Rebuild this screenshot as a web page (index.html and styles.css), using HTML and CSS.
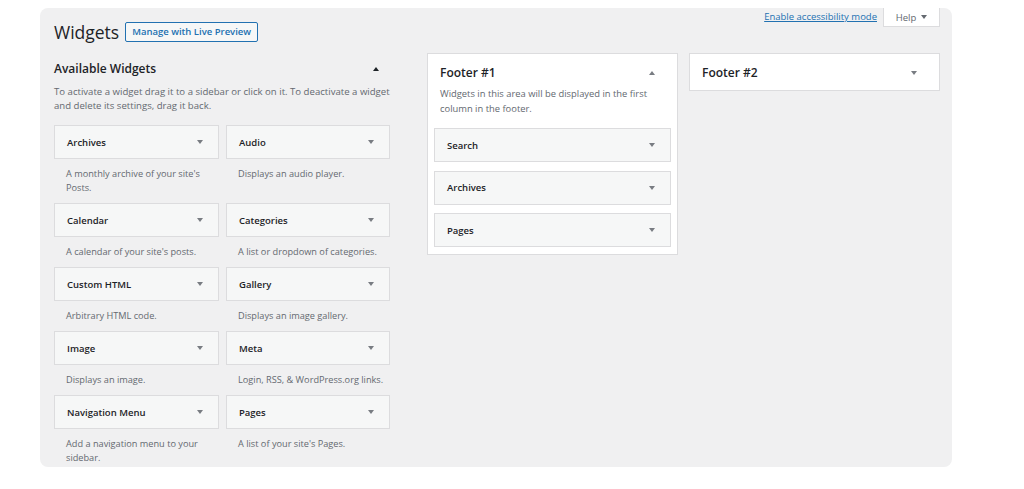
FILE: index.html
```html
<!DOCTYPE html>
<html>
<head>
<meta charset="utf-8">
<link rel="stylesheet" href="styles.css">
</head>
<body>
<div class="panel">
  <div class="screen-meta">
    <a class="a11y" href="#">Enable accessibility mode</a>
    <div class="help-tab">Help <svg class="tri" width="6" height="4" viewBox="0 0 6 4"><path d="M0 0h6L3 4z"/></svg></div>
  </div>
  <div class="head-row">
    <h1 class="title">Widgets</h1>
    <a class="btn" href="#">Manage with Live Preview</a>
  </div>
  <div class="cols">
    <div class="avail">
      <div class="avail-head">
        <h2 class="avail-title">Available Widgets</h2>
        <svg class="tri dark" width="6" height="4" viewBox="0 0 6 4"><path d="M0 4h6L3 0z"/></svg>
      </div>
      <p class="avail-desc">To activate a widget drag it to a sidebar or click on it. To deactivate a widget and delete its settings, drag it back.</p>
      <div class="grid">
        <div class="item"><div class="wbox"><span>Archives</span><svg class="tri" width="6" height="4" viewBox="0 0 6 4"><path d="M0 0h6L3 4z"/></svg></div><p class="wdesc">A monthly archive of your site's Posts.</p></div>
        <div class="item"><div class="wbox"><span>Audio</span><svg class="tri" width="6" height="4" viewBox="0 0 6 4"><path d="M0 0h6L3 4z"/></svg></div><p class="wdesc">Displays an audio player.</p></div>
        <div class="item"><div class="wbox"><span>Calendar</span><svg class="tri" width="6" height="4" viewBox="0 0 6 4"><path d="M0 0h6L3 4z"/></svg></div><p class="wdesc">A calendar of your site's posts.</p></div>
        <div class="item"><div class="wbox"><span>Categories</span><svg class="tri" width="6" height="4" viewBox="0 0 6 4"><path d="M0 0h6L3 4z"/></svg></div><p class="wdesc">A list or dropdown of categories.</p></div>
        <div class="item"><div class="wbox"><span>Custom HTML</span><svg class="tri" width="6" height="4" viewBox="0 0 6 4"><path d="M0 0h6L3 4z"/></svg></div><p class="wdesc">Arbitrary HTML code.</p></div>
        <div class="item"><div class="wbox"><span>Gallery</span><svg class="tri" width="6" height="4" viewBox="0 0 6 4"><path d="M0 0h6L3 4z"/></svg></div><p class="wdesc">Displays an image gallery.</p></div>
        <div class="item"><div class="wbox"><span>Image</span><svg class="tri" width="6" height="4" viewBox="0 0 6 4"><path d="M0 0h6L3 4z"/></svg></div><p class="wdesc">Displays an image.</p></div>
        <div class="item"><div class="wbox"><span>Meta</span><svg class="tri" width="6" height="4" viewBox="0 0 6 4"><path d="M0 0h6L3 4z"/></svg></div><p class="wdesc">Login, RSS, &amp; WordPress.org links.</p></div>
        <div class="item"><div class="wbox"><span>Navigation Menu</span><svg class="tri" width="6" height="4" viewBox="0 0 6 4"><path d="M0 0h6L3 4z"/></svg></div><p class="wdesc">Add a navigation menu to your sidebar.</p></div>
        <div class="item"><div class="wbox"><span>Pages</span><svg class="tri" width="6" height="4" viewBox="0 0 6 4"><path d="M0 0h6L3 4z"/></svg></div><p class="wdesc">A list of your site's Pages.</p></div>
      </div>
    </div>
    <div class="sidebar">
      <div class="sb-head"><h2 class="sb-title">Footer #1</h2><svg class="tri" width="6" height="4" viewBox="0 0 6 4"><path d="M0 4h6L3 0z"/></svg></div>
      <p class="sb-desc">Widgets in this area will be displayed in the first column in the footer.</p>
      <div class="sb-list">
        <div class="wbox"><span>Search</span><svg class="tri" width="6" height="4" viewBox="0 0 6 4"><path d="M0 0h6L3 4z"/></svg></div>
        <div class="wbox"><span>Archives</span><svg class="tri" width="6" height="4" viewBox="0 0 6 4"><path d="M0 0h6L3 4z"/></svg></div>
        <div class="wbox"><span>Pages</span><svg class="tri" width="6" height="4" viewBox="0 0 6 4"><path d="M0 0h6L3 4z"/></svg></div>
      </div>
    </div>
    <div class="sidebar closed">
      <div class="sb-head"><h2 class="sb-title">Footer #2</h2><svg class="tri" width="6" height="4" viewBox="0 0 6 4"><path d="M0 0h6L3 4z"/></svg></div>
    </div>
  </div>
</div>
</body>
</html>
```
FILE: styles.css
```css
* { box-sizing: border-box; }
html, body { margin: 0; padding: 0; background: #fff; }
body {
  font-family: "Open Sans", "Noto Sans", sans-serif;
  color: #1d2327;
  padding: 8px 0 0 40px;
}
.panel {
  position: relative;
  width: 912px;
  height: 459px;
  background: #f0f0f1;
  border-radius: 8px;
  padding: 14px 12px 0 14px;
  overflow: hidden;
}
.screen-meta {
  position: absolute;
  top: 0;
  right: 12px;
  display: flex;
  align-items: flex-start;
  gap: 6px;
}
.a11y {
  font-size: 9.5px;
  color: #2271b1;
  text-decoration: underline;
  line-height: 12px;
  margin-top: 3px;
}
.help-tab {
  width: 57px;
  height: 19px;
  background: #fff;
  border: 1px solid #dcdcde;
  border-top: none;
  font-size: 9.5px;
  color: #646970;
  display: flex;
  align-items: center;
  justify-content: center;
  gap: 5px;
}
.help-tab .tri { fill: #646970; }
.head-row {
  display: flex;
  align-items: center;
  gap: 6px;
  height: 20px;
}
.title {
  margin: 0;
  font-size: 17.5px;
  font-weight: 400;
  line-height: 20px;
}
.btn {
  display: block;
  height: 20px;
  padding: 0 6px;
  border: 1px solid #2271b1;
  border-radius: 2px;
  background: #f6f7f7;
  color: #2271b1;
  font-size: 9.5px;
  font-weight: 600;
  line-height: 18px;
  text-decoration: none;
}
.cols {
  display: flex;
  align-items: flex-start;
  margin-top: 11px;
}
.tri { fill: #787c82; flex: none; }
.tri.dark { fill: #1d2327; }
.avail {
  width: 336px;
  margin-right: 37px;
  padding-top: 7px;
}
.avail-head {
  display: flex;
  align-items: center;
  justify-content: space-between;
  padding-right: 11px;
}
.avail-title {
  margin: 0;
  font-size: 12px;
  font-weight: 600;
  line-height: 18px;
}
.avail-desc {
  margin: 7px 0 0;
  font-size: 9.6px;
  line-height: 14px;
  color: #646970;
}
.grid {
  display: grid;
  grid-template-columns: 165px 164px;
  column-gap: 7px;
  margin-top: 12px;
}
.wbox {
  height: 34px;
  display: flex;
  align-items: center;
  justify-content: space-between;
  padding: 0 15px 0 12px;
  background: #f6f7f7;
  border: 1px solid #dcdcde;
  font-size: 9.5px;
  font-weight: 600;
  color: #1d2327;
}
.wdesc {
  margin: 0;
  padding: 8px 0 8px 12px;
  font-size: 9.2px;
  line-height: 14px;
  color: #646970;
}
.sidebar {
  width: 251px;
  background: #fff;
  border: 1px solid #dcdcde;
  padding: 0 6px 7px;
}
.sidebar + .sidebar { margin-left: 11px; }
.sidebar.closed { padding-bottom: 0; }
.sb-head {
  height: 36px;
  display: flex;
  align-items: center;
  justify-content: space-between;
  padding: 1px 16px 0 6px;
}
.sb-title {
  margin: 0;
  font-size: 12px;
  font-weight: 600;
  line-height: 18px;
}
.sb-desc {
  margin: -4px 0 0;
  padding: 0 6px;
  font-size: 9.4px;
  line-height: 15px;
  color: #646970;
}
.sb-list {
  display: flex;
  flex-direction: column;
  gap: 8.5px;
  margin-top: 12px;
}
.sb-list .wbox { padding-right: 15px; }
```
